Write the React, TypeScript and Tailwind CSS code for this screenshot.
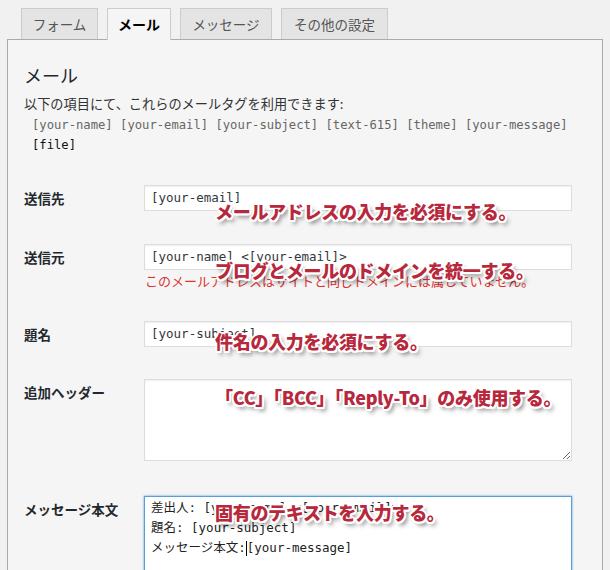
import React from 'react';

const tabs = [
  { label: 'フォーム', w: 'w-[77px]' },
  { label: 'メール', w: 'w-[64px]', active: true },
  { label: 'メッセージ', w: 'w-[92px]' },
  { label: 'その他の設定', w: 'w-[107px]' },
];

const notes = [
  { text: 'メールアドレスの入力を必須にする。', top: 'top-[199px]' },
  { text: 'ブログとメールのドメインを統一する。', top: 'top-[258px]' },
  { text: '件名の入力を必須にする。', top: 'top-[329px]' },
  { text: '「CC」「BCC」「Reply-To」のみ使用する。', top: 'top-[385px]' },
  { text: '固有のテキストを入力する。', top: 'top-[500px]' },
];

const mono = "font-['DejaVu_Sans_Mono','Noto_Sans_CJK_JP',monospace]";

const Label = ({ children }: { children: React.ReactNode }) => (
  <div className="w-[120px] shrink-0 h-[26px] leading-[26px] text-[13.5px] font-bold text-[#23282d]">
    {children}
  </div>
);

const Field = ({ value }: { value: string }) => (
  <div
    className={`w-[428px] h-[26px] border border-[#ddd] bg-white shadow-[inset_0_1px_2px_rgba(0,0,0,0.07)] pl-[6px] leading-[24px] text-[12.5px] text-[#32373c] ${mono}`}
  >
    {value}
  </div>
);

export default function App() {
  return (
    <div className="relative w-[610px] h-[570px] overflow-hidden bg-[#f1f1f1] pt-2 font-['Noto_Sans_CJK_JP','Noto_Sans',sans-serif] text-[#23282d]">
      {/* Tabs */}
      <div className="relative z-10 flex items-start gap-[9px] ml-[21px] h-[32px]">
        {tabs.map((t) => (
          <div
            key={t.label}
            className={
              t.active
                ? `${t.w} h-[32px] border border-b-0 border-[#ccc] bg-[#f5f5f5] text-center leading-[30px] text-[14px] font-bold text-black`
                : `${t.w} h-[31px] border border-b-0 border-[#ccc] bg-[#e4e4e4] text-center leading-[30px] text-[13.5px] text-[#555]`
            }
          >
            {t.label}
          </div>
        ))}
      </div>

      {/* Panel */}
      <div className="-mt-px ml-[7px] w-[596px] h-[560px] border border-[#aaa] bg-[#f5f5f5] pl-4 pt-[23px]">
        <h2 className="text-[18px] leading-[24px] font-normal text-[#23282d]">メール</h2>
        <p className="mt-[7px] text-[13.2px] leading-5 text-[#333]">
          以下の項目にて、これらのメールタグを利用できます:
        </p>
        <div className={`mt-px pl-2 text-[12.2px] leading-5 ${mono}`}>
          <div className="text-[#666]">
            [your-name] [your-email] [your-subject] [text-615] [theme] [your-message]
          </div>
          <div className="text-[#111]">[file]</div>
        </div>

        <div className="mt-[30px] flex">
          <Label>送信先</Label>
          <Field value="[your-email]" />
        </div>

        <div className="mt-[33px] flex">
          <Label>送信元</Label>
          <div>
            <Field value="[your-name] <[your-email]>" />
            <div className="mt-[2px] pl-px text-[13px] leading-[18px] text-[#dc3232]">
              このメールアドレスはサイトと同じドメインには属していません。
            </div>
          </div>
        </div>

        <div className="mt-[31px] flex">
          <Label>題名</Label>
          <Field value="[your-subject]" />
        </div>

        <div className="mt-[32px] flex">
          <Label>追加ヘッダー</Label>
          <textarea
            readOnly
            value=""
            className="block w-[428px] h-[82px] border border-[#ddd] bg-white shadow-[inset_0_1px_2px_rgba(0,0,0,0.07)] outline-none"
          />
        </div>

        <div className="mt-[35px] flex">
          <Label>メッセージ本文</Label>
          <div
            className={`w-[428px] h-[140px] border border-[#5b9dd9] bg-white shadow-[0_0_2px_rgba(30,140,190,0.8)] pl-[6px] pt-px text-[12.5px] leading-5 text-[#222] ${mono}`}
          >
            <div>差出人: [your-name] &lt;[your-email]&gt;</div>
            <div>題名: [your-subject]</div>
            <div className="flex items-center">
              <span>メッセージ本文:</span>
              <span className="inline-block w-px h-[15px] bg-black" />
              <span>[your-message]</span>
            </div>
          </div>
        </div>
      </div>

      {/* Annotations */}
      {notes.map((n) => (
        <div
          key={n.text}
          className={`absolute left-[215px] ${n.top} whitespace-nowrap text-[18px] leading-[24px] font-black tracking-[-0.3px] text-[#b8283c] [text-shadow:1.5px_1.5px_0_#fff,-1.5px_-1.5px_0_#fff,1.5px_-1.5px_0_#fff,-1.5px_1.5px_0_#fff,0_2px_0_#fff,2px_0_0_#fff,0_-2px_0_#fff,-2px_0_0_#fff,3px_4px_4px_rgba(0,0,0,0.5)]`}
        >
          {n.text}
        </div>
      ))}
    </div>
  );
}
